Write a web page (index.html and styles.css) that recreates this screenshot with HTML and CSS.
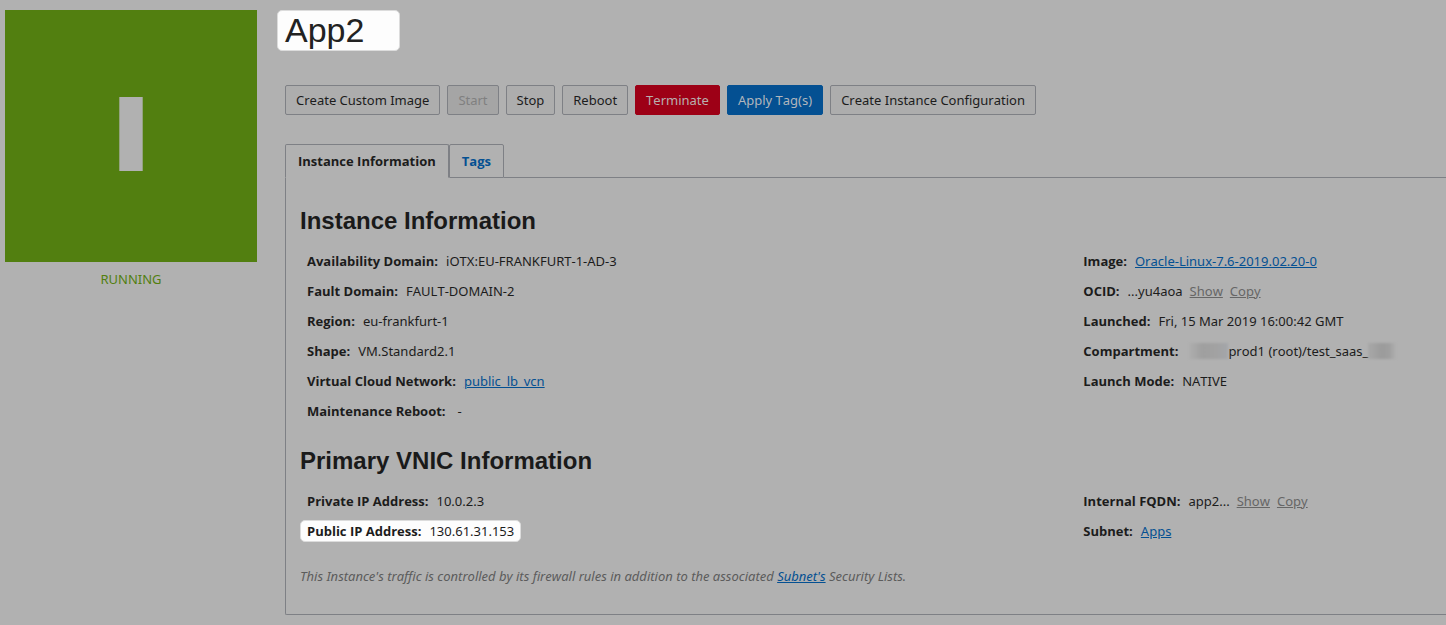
FILE: index.html
```html
<!DOCTYPE html>
<html lang="en">
<head>
<meta charset="utf-8">
<meta name="viewport" content="width=device-width, initial-scale=1">
<title>App2 - Instance</title>
<link rel="stylesheet" href="styles.css">
</head>
<body>
<div class="page">
  <aside class="status">
    <svg class="status-tile" viewBox="0 0 252 252" role="img" aria-label="Instance">
      <rect class="tile-bg" width="252" height="252"/>
      <rect class="tile-mark" x="114.3" y="87" width="23.4" height="74"/>
    </svg>
    <p class="status-label">RUNNING</p>
  </aside>
  <main class="main">
    <h1 class="title">App2</h1>
    <div class="actions">
      <button type="button" class="btn">Create Custom Image</button>
      <button type="button" class="btn" disabled>Start</button>
      <button type="button" class="btn">Stop</button>
      <button type="button" class="btn">Reboot</button>
      <button type="button" class="btn btn-danger">Terminate</button>
      <button type="button" class="btn btn-primary">Apply Tag(s)</button>
      <button type="button" class="btn">Create Instance Configuration</button>
    </div>
    <div class="tabs" role="tablist">
      <button type="button" class="tab tab-active" role="tab" aria-selected="true">Instance Information</button>
      <button type="button" class="tab" role="tab" aria-selected="false">Tags</button>
      <span class="tab-rule"></span>
    </div>
    <section class="panel">
      <h2 class="heading">Instance Information</h2>
      <div class="columns">
        <dl class="list">
          <div class="row"><dt>Availability Domain:</dt><dd>iOTX:EU-FRANKFURT-1-AD-3</dd></div>
          <div class="row"><dt>Fault Domain:</dt><dd>FAULT-DOMAIN-2</dd></div>
          <div class="row"><dt>Region:</dt><dd>eu-frankfurt-1</dd></div>
          <div class="row"><dt>Shape:</dt><dd>VM.Standard2.1</dd></div>
          <div class="row"><dt>Virtual Cloud Network:</dt><dd><a class="link" href="#">public_lb_vcn</a></dd></div>
          <div class="row"><dt>Maintenance Reboot:</dt><dd class="empty">-</dd></div>
        </dl>
        <dl class="list">
          <div class="row"><dt>Image:</dt><dd><a class="link" href="#">Oracle-Linux-7.6-2019.02.20-0</a></dd></div>
          <div class="row"><dt>OCID:</dt><dd class="with-links">...yu4aoa <a class="link-muted" href="#">Show</a> <a class="link-muted" href="#">Copy</a></dd></div>
          <div class="row"><dt>Launched:</dt><dd>Fri, 15 Mar 2019 16:00:42 GMT</dd></div>
          <div class="row"><dt>Compartment:</dt><dd class="compartment"><span class="redacted redacted-start"></span>prod1 (root)/test_saas_<span class="redacted redacted-end"></span></dd></div>
          <div class="row"><dt>Launch Mode:</dt><dd>NATIVE</dd></div>
        </dl>
      </div>
      <h2 class="heading">Primary VNIC Information</h2>
      <div class="columns">
        <dl class="list">
          <div class="row"><dt>Private IP Address:</dt><dd>10.0.2.3</dd></div>
          <div class="row row-highlight"><dt>Public IP Address:</dt><dd>130.61.31.153</dd></div>
        </dl>
        <dl class="list">
          <div class="row"><dt>Internal FQDN:</dt><dd class="with-links">app2... <a class="link-muted" href="#">Show</a> <a class="link-muted" href="#">Copy</a></dd></div>
          <div class="row"><dt>Subnet:</dt><dd><a class="link" href="#">Apps</a></dd></div>
        </dl>
      </div>
      <p class="note">This Instance's traffic is controlled by its firewall rules in addition to the associated <a class="link" href="#">Subnet's</a> Security Lists.</p>
    </section>
  </main>
</div>
</body>
</html>
```
FILE: styles.css
```css
* { box-sizing: border-box; }
body {
  margin: 0;
  background: #b1b1b1;
  color: #1c1c1c;
  font-family: "Noto Sans", "Open Sans", sans-serif;
  font-size: 13px;
  font-kerning: none;
  line-height: 20px;
}
h1, h2, p, dl, dd { margin: 0; }

.page {
  display: flex;
  gap: 28px;
  padding: 10px 0 10px 5px;
}
.status { flex: 0 0 252px; }
.status-tile { display: block; width: 100%; }
.tile-bg { fill: #527f10; }
.tile-mark { fill: #b1b1b1; }
.status-label {
  margin-top: 7px;
  color: #527f10;
  text-align: center;
}

.main { flex: 1; min-width: 0; }
.title {
  width: fit-content;
  margin-left: -8px;
  padding: 0 35px 0 7px;
  border: 1px solid #dcdcdc;
  border-radius: 5px;
  background: #fdfdfd;
  color: #222;
  font: 400 34px/39px "Liberation Sans", Arial, sans-serif;
}

.actions {
  display: flex;
  flex-wrap: wrap;
  gap: 7px;
  margin-top: 34px;
}
.btn {
  height: 30px;
  padding: 0 10px;
  border: 1px solid #7e8085;
  border-radius: 2px;
  background: #adadad;
  color: #1c1c1c;
  font: inherit;
}
.btn:disabled { background: #a5a5a5; color: #808080; }
.btn-danger { border-color: #9d0016; background: #9d0016; color: #b8b0b0; }
.btn-primary { border-color: #045092; background: #045092; color: #b1b6bc; }

.tabs { display: flex; margin-top: 29px; }
.tab {
  height: 34px;
  padding: 0 12px;
  border: 1px solid #7e8085;
  border-radius: 2px 2px 0 0;
  background: transparent;
  color: #045092;
  font: 700 13px/20px "Open Sans", sans-serif;
}
.tab-active { border-bottom-color: transparent; color: #1c1c1c; }
.tab-rule { flex: 1; border-bottom: 1px solid #7e8085; }
.panel {
  padding: 28px 0 28px 14px;
  border: solid #7e8085;
  border-width: 0 0 1px 1px;
  border-radius: 0 0 0 2px;
}
.heading {
  color: #1a1a1a;
  font: 700 24px/30px "Liberation Sans", Arial, sans-serif;
}
.columns {
  display: grid;
  grid-template-columns: minmax(0, 21fr) minmax(0, 10fr);
  margin-top: 14px;
}
.columns + .heading, .note { margin-top: 24px; }
.list { display: flex; flex-direction: column; gap: 8px; }
.row {
  display: flex;
  gap: 8px;
  width: fit-content;
  padding: 0 6px;
  border: 1px solid transparent;
  border-radius: 5px;
  white-space: nowrap;
}
dt { font-family: "Open Sans", sans-serif; font-weight: 700; }
.row-highlight { border-color: #dcdcdc; background: #fdfdfd; }
.empty { padding-left: 4px; }
.with-links { display: flex; gap: 7px; }
.link { color: #045092; }
.link-muted { color: #666; }
.link, .link-muted { text-underline-offset: 1px; }
.compartment { display: flex; align-items: center; padding-left: 3px; }
.redacted { height: 16px; filter: blur(1px); }
.redacted-start {
  width: 39px;
  background: linear-gradient(90deg, #aeaeae, #9f9f9f 35%, #a2a2a2 70%, #a4a6aa);
}
.redacted-end {
  width: 28px;
  background: linear-gradient(90deg, #a8a8a8, #9b9b9b 50%, #9f9f9f 75%, #afafaf);
}
.note { color: #5c5c5c; font-style: italic; }
```
